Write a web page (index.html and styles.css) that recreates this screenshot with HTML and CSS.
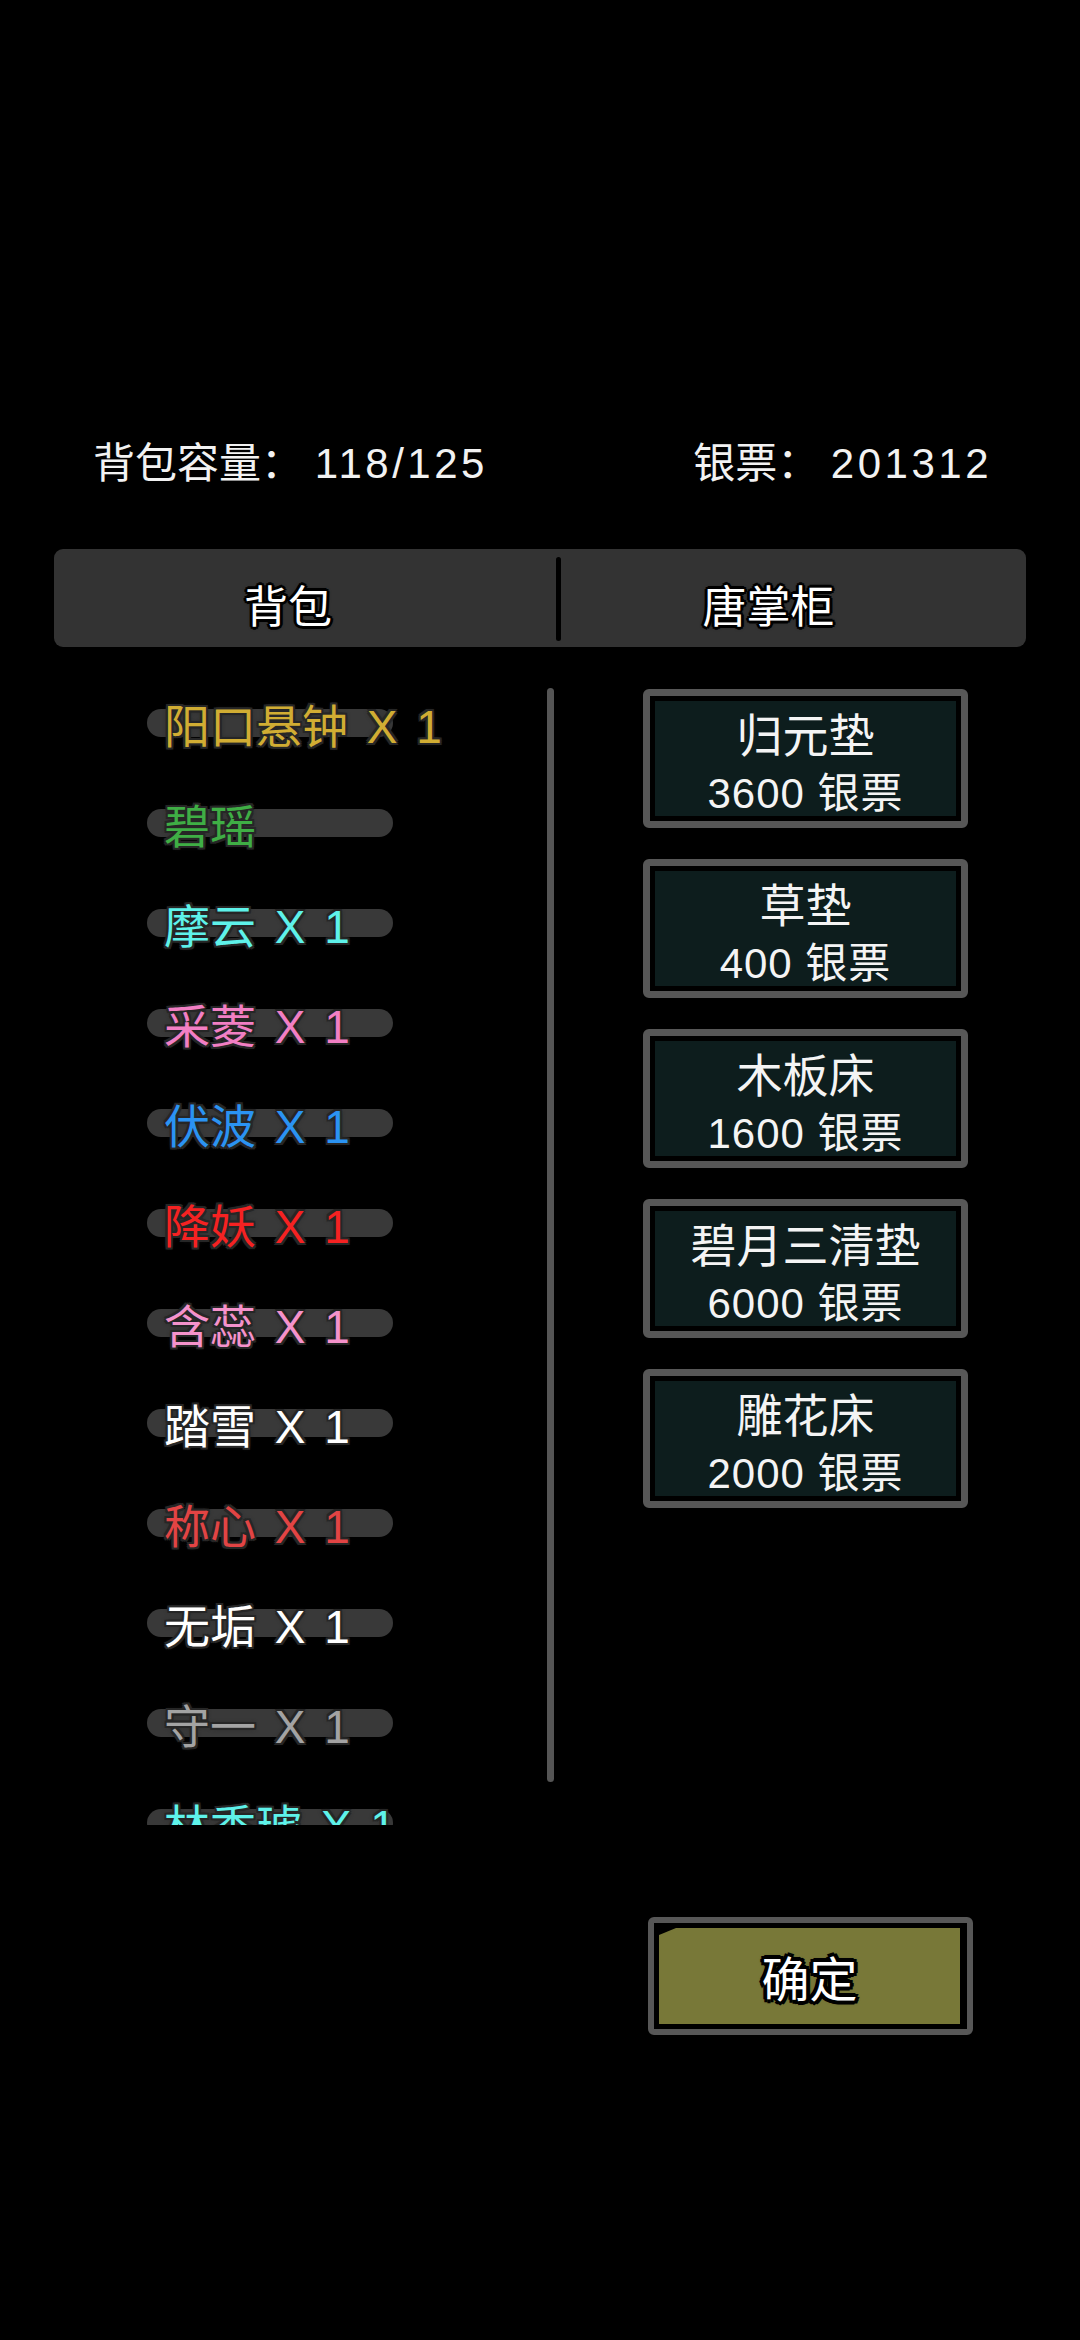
FILE: index.html
```html
<!DOCTYPE html>
<html lang="zh-CN">
<head>
<meta charset="utf-8">
<title>背包</title>
<link rel="stylesheet" href="styles.css">
</head>
<body>
<div class="page">
  <div class="stats">
    <span class="stat">背包容量： <span class="num">118/125</span></span>
    <span class="stat">银票： <span class="num">201312</span></span>
  </div>

  <div class="tabs">
    <div class="tab tab-left">背包</div>
    <div class="tab-divider"></div>
    <div class="tab tab-right">唐掌柜</div>
  </div>

  <div class="main">
    <div class="list">
      <div class="item"><span class="pill"></span><span class="name c-gold">阳口悬钟 X 1</span></div>
      <div class="item"><span class="pill"></span><span class="name c-green">碧瑶</span></div>
      <div class="item"><span class="pill"></span><span class="name c-cyan">摩云 X 1</span></div>
      <div class="item"><span class="pill"></span><span class="name c-pink">采菱 X 1</span></div>
      <div class="item"><span class="pill"></span><span class="name c-blue">伏波 X 1</span></div>
      <div class="item"><span class="pill"></span><span class="name c-red">降妖 X 1</span></div>
      <div class="item"><span class="pill"></span><span class="name c-pink2">含蕊 X 1</span></div>
      <div class="item"><span class="pill"></span><span class="name c-white">踏雪 X 1</span></div>
      <div class="item"><span class="pill"></span><span class="name c-red2">称心 X 1</span></div>
      <div class="item"><span class="pill"></span><span class="name c-white">无垢 X 1</span></div>
      <div class="item"><span class="pill"></span><span class="name c-gray">守一 X 1</span></div>
      <div class="item"><span class="pill"></span><span class="name c-cyan">林香琥 X 1</span></div>
    </div>
    <div class="scrollbar"></div>
    <div class="shop">
      <div class="card"><div class="card-inner"><div class="card-title">归元垫</div><div class="card-price">3600 银票</div></div></div>
      <div class="card"><div class="card-inner"><div class="card-title">草垫</div><div class="card-price">400 银票</div></div></div>
      <div class="card"><div class="card-inner"><div class="card-title">木板床</div><div class="card-price">1600 银票</div></div></div>
      <div class="card"><div class="card-inner"><div class="card-title">碧月三清垫</div><div class="card-price">6000 银票</div></div></div>
      <div class="card"><div class="card-inner"><div class="card-title">雕花床</div><div class="card-price">2000 银票</div></div></div>
    </div>
  </div>

  <div class="footer">
    <div class="confirm"><div class="confirm-inner"><div class="confirm-fill"><span class="confirm-text">确定</span></div></div></div>
  </div>
</div>
</body>
</html>
```
FILE: styles.css
```css
html, body {
  margin: 0;
  padding: 0;
  background: #000;
}
body {
  width: 1080px;
  height: 2340px;
  overflow: hidden;
  font-family: "Liberation Sans", "Noto Sans CJK SC", sans-serif;
  color: #fff;
}
.page {
  display: flex;
  flex-direction: column;
}
.stats {
  height: 42px;
  margin-top: 443px;
  padding: 0 88px 0 93px;
  display: flex;
  justify-content: space-between;
  align-items: center;
}
.stat {
  font-size: 42px;
  line-height: 42px;
  color: #f2f2f2;
  white-space: pre;
}
.num {
  letter-spacing: 3.5px;
}
.tabs {
  margin: 64px 54px 0 54px;
  height: 98px;
  background: #333333;
  border-radius: 9px;
  display: flex;
  align-items: center;
}
.tab {
  font-family: "Noto Sans CJK SC", sans-serif;
  font-size: 44px;
  line-height: 98px;
  height: 98px;
  text-align: center;
  color: #fff;
  text-shadow:
    3px 0 0 #000, -3px 0 0 #000, 0 3px 0 #000, 0 -3px 0 #000,
    2px 2px 0 #000, -2px 2px 0 #000, 2px -2px 0 #000, -2px -2px 0 #000,
    0 0 4px #000;
  padding-top: 6px;
  box-sizing: border-box;
}
.tab-left {
  width: 502px;
  padding-right: 34px;
}
.tab-right {
  width: 465px;
  padding-right: 50px;
}
.tab-divider {
  width: 5px;
  height: 84px;
  background: #000;
  border-radius: 3px;
  margin-top: 2px;
}
.main {
  display: flex;
  margin-top: 27px;
  height: 1151px;
}
.list {
  width: 400px;
  margin-left: 147px;
  height: 1151px;
  overflow: hidden;
  display: flex;
  flex-direction: column;
}
.item {
  flex: 0 0 100px;
  height: 100px;
  display: grid;
  align-items: center;
  justify-items: start;
}
.pill {
  grid-area: 1 / 1;
  width: 246px;
  height: 28px;
  border-radius: 14px;
  background: #393939;
  margin-top: -2px;
}
.name {
  grid-area: 1 / 1;
  margin-left: 17px;
  padding-top: 5px;
  font-size: 46px;
  line-height: 60px;
  white-space: pre;
  word-spacing: 6px;
  text-shadow:
    2px 0 0 #262626, -2px 0 0 #262626, 0 2px 0 #262626, 0 -2px 0 #262626,
    2px 2px 0 #262626, -2px 2px 0 #262626, 2px -2px 0 #262626, -2px -2px 0 #262626,
    0 0 5px #1e1e1e;
}
.c-gold { color: #d1ad33; }
.c-green { color: #3fae45; }
.c-cyan { color: #5ef2ea; }
.c-pink { color: #f27fc4; }
.c-pink2 { color: #f592cb; }
.c-blue { color: #2b93f2; }
.c-red { color: #f52222; }
.c-red2 { color: #e24444; }
.c-white { color: #ffffff; }
.c-gray { color: #a3a3a3; }
.scrollbar {
  width: 7px;
  height: 1094px;
  margin-top: 14px;
  background: #555;
  border-radius: 4px;
}
.shop {
  margin-left: 89px;
  margin-top: 15px;
  display: flex;
  flex-direction: column;
  gap: 31px;
}
.card {
  width: 325px;
  height: 139px;
  box-sizing: border-box;
  border: 7px solid #575757;
  border-radius: 6px;
  background: #000;
}
.card-inner {
  height: 100%;
  box-sizing: border-box;
  border: 5px solid #000;
  background: #0d1d1d;
  display: flex;
  flex-direction: column;
  align-items: center;
  color: #f4f4f4;
}
.card-title {
  font-size: 46px;
  line-height: 56px;
  margin-top: 7px;
}
.card-price {
  font-size: 42px;
  line-height: 50px;
  margin-top: 5px;
  letter-spacing: 1px;
}
.footer {
  margin-top: 92px;
  padding-left: 648px;
  display: flex;
}
.confirm {
  width: 325px;
  height: 118px;
  box-sizing: border-box;
  border: 6px solid #575757;
  border-radius: 6px;
  background: #000;
}
.confirm-inner {
  height: 100%;
  box-sizing: border-box;
  border: 5px solid #000;
  border-right-width: 7px;
}
.confirm-fill {
  height: 100%;
  background: #787838;
  clip-path: polygon(0 7px, 17px 0, 100% 0, 100% 100%, 0 100%);
  display: flex;
  align-items: center;
  justify-content: center;
}
.confirm-text {
  font-family: "Noto Sans CJK SC", sans-serif;
  font-size: 48px;
  line-height: 60px;
  color: #fff;
  text-shadow:
    4px 0 0 #000, -4px 0 0 #000, 0 4px 0 #000, 0 -4px 0 #000,
    3px 3px 0 #000, -3px 3px 0 #000, 3px -3px 0 #000, -3px -3px 0 #000,
    0 0 5px #000;
}
```
